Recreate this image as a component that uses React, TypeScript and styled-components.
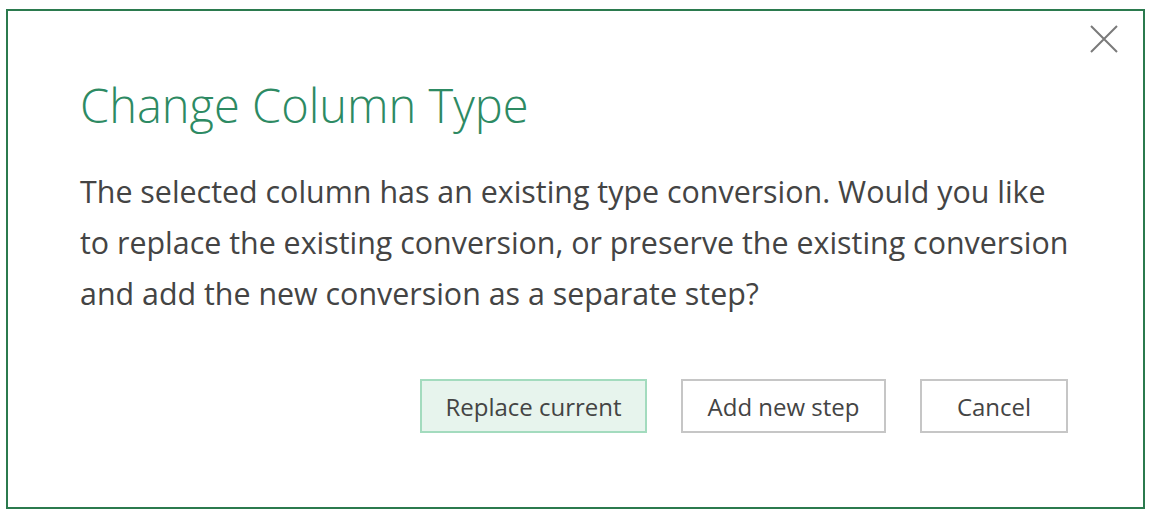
import styled, { createGlobalStyle } from "styled-components";

const GlobalStyle = createGlobalStyle`
  html, body {
    margin: 0;
    padding: 0;
    background: #ffffff;
  }
  body {
    font-family: "Open Sans", "Noto Sans", sans-serif;
  }
`;

const Dialog = styled.div`
  box-sizing: border-box;
  width: 1139px;
  height: 500px;
  margin: 9px 0 0 6px;
  border: 2px solid #2b7a4e;
  padding: 12px 23px 0 72px;
  display: flex;
  flex-direction: column;
`;

const CloseRow = styled.div`
  display: flex;
  justify-content: flex-end;
  height: 32px;
`;

const CloseButton = styled.button`
  width: 32px;
  height: 32px;
  padding: 0;
  border: none;
  background: transparent;
  cursor: pointer;
  display: flex;
  align-items: center;
  justify-content: center;
`;

const Title = styled.h1`
  margin: 20px 0 0 0;
  font-family: "Open Sans", "Noto Sans", sans-serif;
  font-weight: 300;
  font-size: 47px;
  line-height: 60px;
  color: #2d8a63;
`;

const Message = styled.p`
  margin: 31px 0 0 0;
  font-size: 30.4px;
  line-height: 51px;
  color: #444444;
  white-space: nowrap;
`;

const ButtonRow = styled.div`
  display: flex;
  justify-content: flex-end;
  gap: 34px;
  margin-top: 60px;
  padding-right: 52px;
`;

const Button = styled.button<{ $primary?: boolean; $width: number }>`
  box-sizing: border-box;
  width: ${(p) => p.$width}px;
  height: 54px;
  border: 2px solid ${(p) => (p.$primary ? "#a3dbbe" : "#c6c6c6")};
  background: ${(p) => (p.$primary ? "#e7f4ed" : "#ffffff")};
  color: #444444;
  font-family: "Open Sans", "Noto Sans", sans-serif;
  font-size: 24px;
  padding: 0;
  cursor: pointer;
`;

const CloseIcon = () => (
  <svg width="28" height="28" viewBox="0 0 28 28">
    <path
      d="M1 1 L27 27 M27 1 L1 27"
      stroke="#7a7a7a"
      strokeWidth="2"
      fill="none"
    />
  </svg>
);

export default function App() {
  return (
    <>
      <GlobalStyle />
      <Dialog>
        <CloseRow>
          <CloseButton aria-label="Close">
            <CloseIcon />
          </CloseButton>
        </CloseRow>
        <Title>Change Column Type</Title>
        <Message>
          The selected column has an existing type conversion. Would you like
          <br />
          to replace the existing conversion, or preserve the existing conversion
          <br />
          and add the new conversion as a separate step?
        </Message>
        <ButtonRow>
          <Button $primary $width={227}>
            Replace current
          </Button>
          <Button $width={205}>Add new step</Button>
          <Button $width={148}>Cancel</Button>
        </ButtonRow>
      </Dialog>
    </>
  );
}
